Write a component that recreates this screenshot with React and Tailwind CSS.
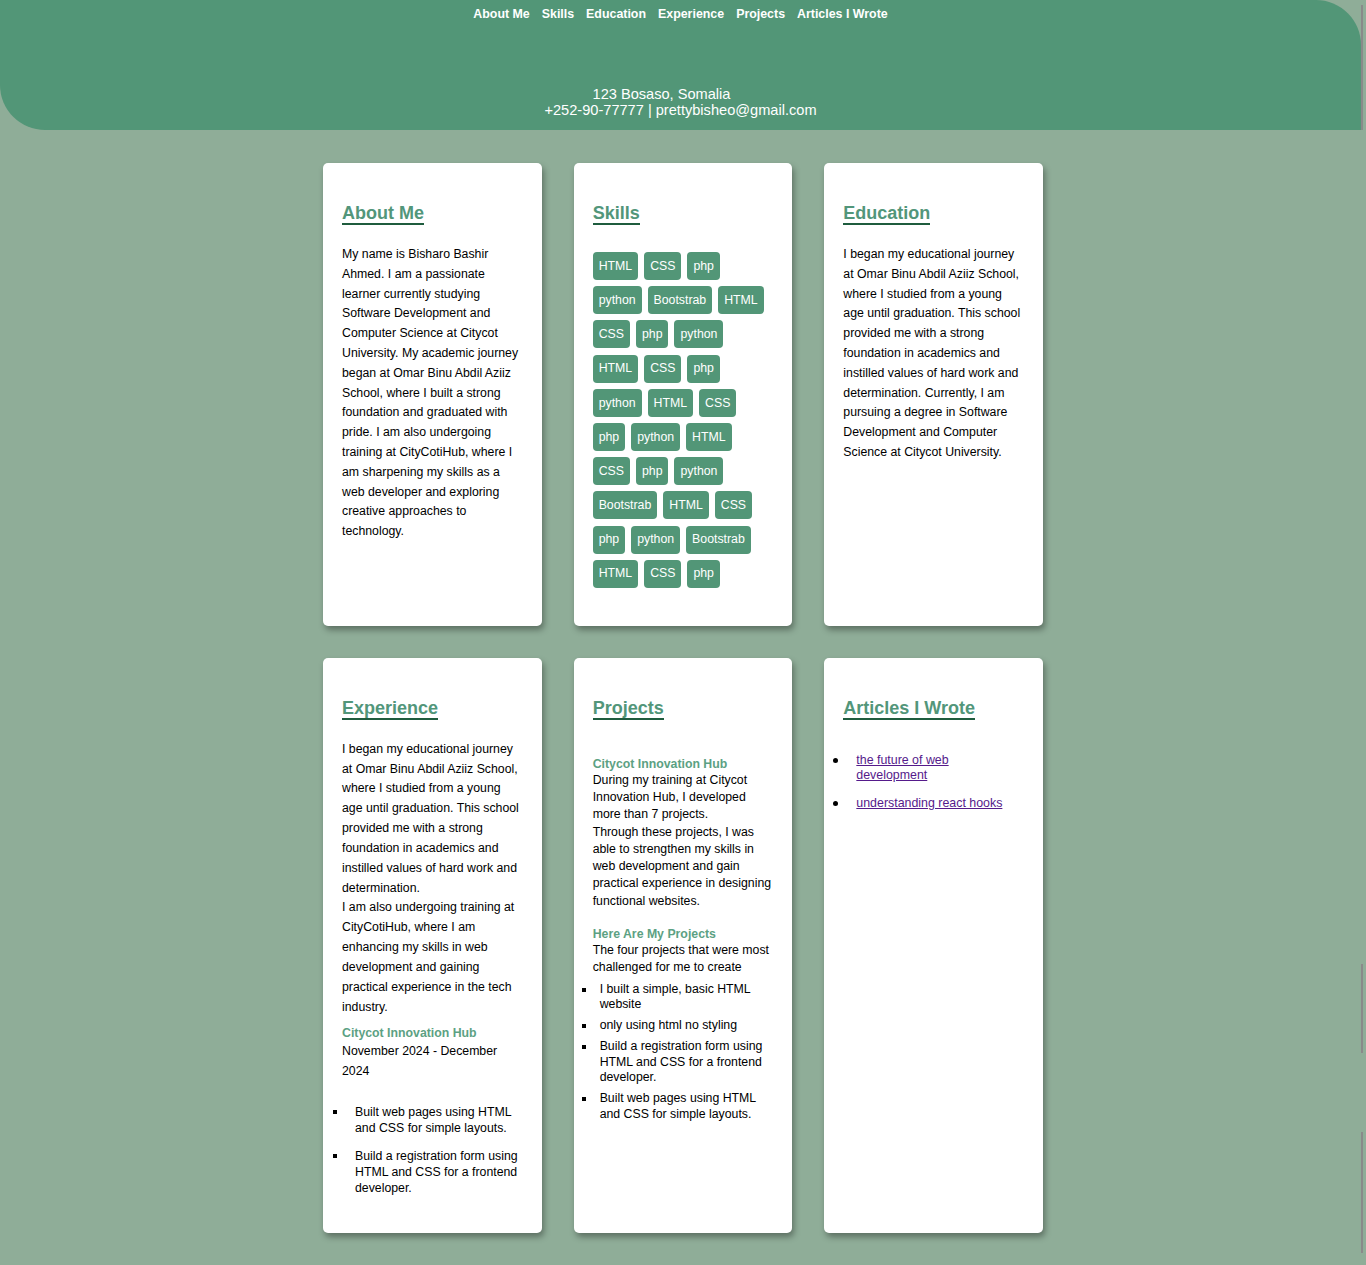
import React from "react";

const font = { fontFamily: '"Liberation Sans", Arial, sans-serif' };

const navLinks = ["About Me", "Skills", "Education", "Experience", "Projects", "Articles I Wrote"];

const aboutLines = [
  "My name is Bisharo Bashir",
  "Ahmed. I am a passionate",
  "learner currently studying",
  "Software Development and",
  "Computer Science at Citycot",
  "University. My academic journey",
  "began at Omar Binu Abdil Aziiz",
  "School, where I built a strong",
  "foundation and graduated with",
  "pride. I am also undergoing",
  "training at CityCotiHub, where I",
  "am sharpening my skills as a",
  "web developer and exploring",
  "creative approaches to",
  "technology.",
];

const educationLines = [
  "I began my educational journey",
  "at Omar Binu Abdil Aziiz School,",
  "where I studied from a young",
  "age until graduation. This school",
  "provided me with a strong",
  "foundation in academics and",
  "instilled values of hard work and",
  "determination. Currently, I am",
  "pursuing a degree in Software",
  "Development and Computer",
  "Science at Citycot University.",
];

const experienceLines = [
  "I began my educational journey",
  "at Omar Binu Abdil Aziiz School,",
  "where I studied from a young",
  "age until graduation. This school",
  "provided me with a strong",
  "foundation in academics and",
  "instilled values of hard work and",
  "determination.",
  "I am also undergoing training at",
  "CityCotiHub, where I am",
  "enhancing my skills in web",
  "development and gaining",
  "practical experience in the tech",
  "industry.",
];

const skillRows = [
  ["HTML", "CSS", "php"],
  ["python", "Bootstrab", "HTML"],
  ["CSS", "php", "python"],
  ["HTML", "CSS", "php"],
  ["python", "HTML", "CSS"],
  ["php", "python", "HTML"],
  ["CSS", "php", "python"],
  ["Bootstrab", "HTML", "CSS"],
  ["php", "python", "Bootstrab"],
  ["HTML", "CSS", "php"],
];

const projectLines = [
  "During my training at Citycot",
  "Innovation Hub, I developed",
  "more than 7 projects.",
  "Through these projects, I was",
  "able to strengthen my skills in",
  "web development and gain",
  "practical experience in designing",
  "functional websites.",
];

const projectList = [
  ["I built a simple, basic HTML", "website"],
  ["only using html no styling"],
  ["Build a registration form using", "HTML and CSS for a frontend", "developer."],
  ["Built web pages using HTML", "and CSS for simple layouts."],
];

const experienceList = [
  ["Built web pages using HTML", "and CSS for simple layouts."],
  ["Build a registration form using", "HTML and CSS for a frontend", "developer."],
];

function Lines({ lines }) {
  return lines.map((l, i) => (
    <span key={i} className="block whitespace-nowrap">{l}</span>
  ));
}

function Card({ title, children }) {
  return (
    <div className="bg-white rounded-[5px] shadow-[2px_4px_6px_rgba(0,0,0,0.35)] pt-[41px] px-[19px] pb-[37px]">
      <h2 className="inline-block text-[18px] leading-[19px] font-bold text-[#52967a] border-b-2 border-[#1f5c3e]">
        {title}
      </h2>
      {children}
    </div>
  );
}

function SquareList({ items, lh, gap, offset, bulletW }) {
  return (
    <ul className={`flex flex-col ${gap}`} style={{ marginLeft: offset }}>
      {items.map((item, i) => (
        <li key={i} className={`flex ${lh}`}>
          <span className="shrink-0 flex justify-start" style={{ width: bulletW }}>
            <span className="block w-[4px] h-[4px] bg-black mt-[6px]" />
          </span>
          <span><Lines lines={item} /></span>
        </li>
      ))}
    </ul>
  );
}

export default function App() {
  return (
    <div style={font} className="relative min-h-screen bg-[#8fad98] text-black text-[12.3px] pb-[32px]">
      {/* header */}
      <header className="mr-[5px] h-[130px] bg-[#529677] rounded-tr-[45px] rounded-bl-[45px] text-white pt-[6px]">
        <nav className="flex justify-center gap-[12px] text-[12.4px] leading-[16px] font-bold">
          {navLinks.map((n) => (
            <a key={n} href="#" className="text-white">{n}</a>
          ))}
        </nav>
        <div className="mt-[64px] text-center text-[14.6px] leading-[16px]">
          <p className="pr-[38px]">123 Bosaso, Somalia</p>
          <p>+252-90-77777 | prettybisheo@gmail.com</p>
        </div>
      </header>

      {/* cards */}
      <main className="mt-[33px] mx-auto w-[720px] grid grid-cols-3 gap-[32px]">
        <Card title="About Me">
          <p className="mt-[20px] leading-[19.8px]"><Lines lines={aboutLines} /></p>
        </Card>

        <Card title="Skills">
          <div className="mt-[27px] flex flex-col gap-[6.2px] pb-[1px]">
            {skillRows.map((row, i) => (
              <div key={i} className="flex gap-[6px]">
                {row.map((s, j) => (
                  <span key={j} className="bg-[#529677] text-white rounded-[4px] h-[28px] px-[6px] flex items-center">
                    {s}
                  </span>
                ))}
              </div>
            ))}
          </div>
        </Card>

        <Card title="Education">
          <p className="mt-[20px] leading-[19.8px]"><Lines lines={educationLines} /></p>
        </Card>

        <Card title="Experience">
          <p className="mt-[20px] leading-[19.85px]"><Lines lines={experienceLines} /></p>
          <h3 className="mt-[8.6px] leading-[15px] font-bold text-[#5ca183]">Citycot Innovation Hub</h3>
          <p className="leading-[20px]">
            <Lines lines={["November 2024 - December", "2024"]} />
          </p>
          <div className="mt-[23px]">
            <SquareList items={experienceList} lh="leading-[16px]" gap="gap-[12px]" offset="-9px" bulletW="22px" />
          </div>
        </Card>

        <Card title="Projects">
          <h3 className="mt-[36px] leading-[16px] font-bold text-[#5ca183]">Citycot Innovation Hub</h3>
          <p className="leading-[17.3px]"><Lines lines={projectLines} /></p>
          <h3 className="mt-[15.6px] leading-[16px] font-bold text-[#5ca183]">Here Are My Projects</h3>
          <p className="leading-[17.3px]">
            <Lines lines={["The four projects that were most", "challenged for me to create"]} />
          </p>
          <div className="mt-[5.5px]">
            <SquareList items={projectList} lh="leading-[15.5px]" gap="gap-[5.5px]" offset="-11px" bulletW="18px" />
          </div>
        </Card>

        <Card title="Articles I Wrote">
          <ul className="mt-[33.5px] ml-[-10px] flex flex-col gap-[13px] text-[12.4px] leading-[15px]">
            {[["the future of web", "development"], ["understanding react hooks"]].map((a, i) => (
              <li key={i} className="flex">
                <span className="shrink-0 w-[23px]">
                  <span className="block w-[5px] h-[5px] rounded-full bg-black mt-[5px]" />
                </span>
                <a href="#" className="underline text-[#551a8b]">
                  <Lines lines={a} />
                </a>
              </li>
            ))}
          </ul>
        </Card>
      </main>

      {/* scrollbar traces on the right edge */}
      <div className="absolute left-[1361px] top-[5px] w-[2px] h-[125px] bg-[#8a8a8a]" />
      <div className="absolute left-[1361px] top-[964px] w-[2px] h-[89px] bg-[#8a8a8a]" />
      <div className="absolute left-[1361px] top-[1132px] w-[2px] h-[121px] bg-[#8a8a8a]" />
    </div>
  );
}
